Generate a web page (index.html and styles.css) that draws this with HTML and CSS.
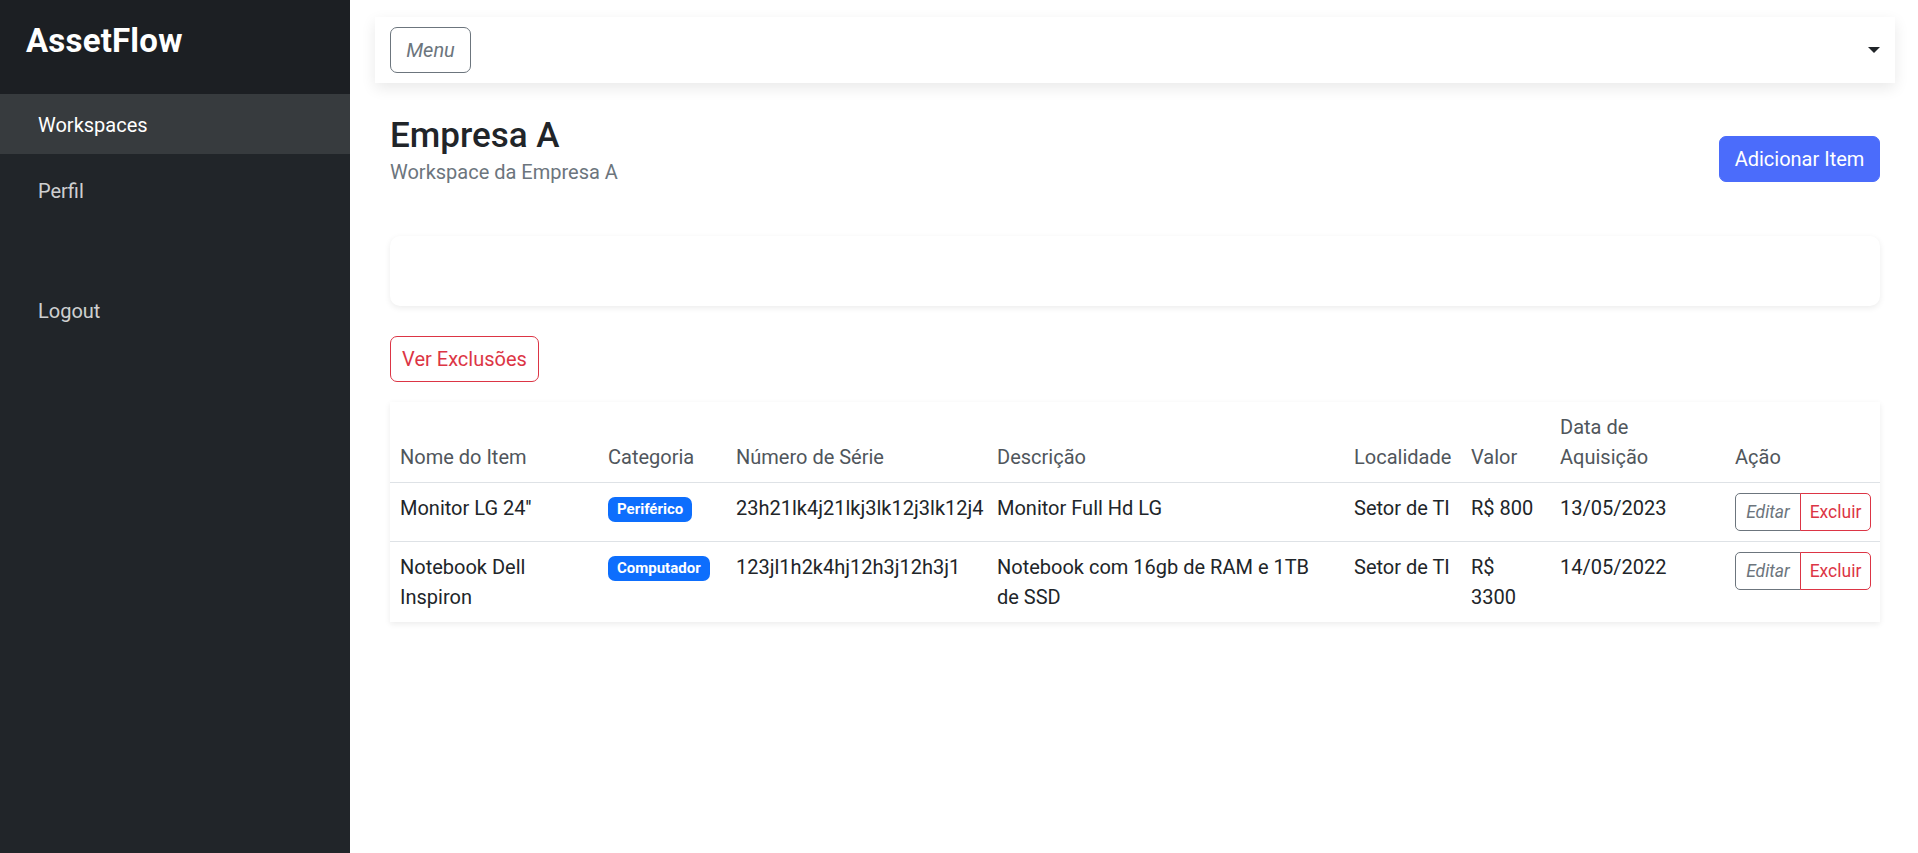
FILE: index.html
```html
<!DOCTYPE html>
<html lang="pt-BR">
<head>
<meta charset="utf-8">
<title>AssetFlow</title>
<link rel="stylesheet" href="styles.css">
</head>
<body>
<div class="app">
  <aside class="sidebar">
    <div class="brand">AssetFlow</div>
    <nav class="side-nav">
      <a class="side-link active" href="#">Workspaces</a>
      <a class="side-link perfil" href="#">Perfil</a>
      <a class="side-link logout" href="#">Logout</a>
    </nav>
  </aside>
  <main class="main">
    <header class="topbar">
      <button class="btn btn-menu">Menu</button>
      <span class="caret"></span>
    </header>
    <section class="content">
      <div class="page-head">
        <div class="page-titles">
          <h1 class="page-title">Empresa A</h1>
          <p class="page-sub">Workspace da Empresa A</p>
        </div>
        <button class="btn btn-primary">Adicionar Item</button>
      </div>
      <div class="filter-card"></div>
      <button class="btn btn-outline-danger">Ver Exclusões</button>
      <div class="table-card">
        <table class="items">
          <colgroup>
            <col class="c-name"><col class="c-cat"><col class="c-serial"><col class="c-desc">
            <col class="c-loc"><col class="c-val"><col class="c-date"><col class="c-act">
          </colgroup>
          <thead>
            <tr>
              <th>Nome do Item</th>
              <th>Categoria</th>
              <th>Número de Série</th>
              <th>Descrição</th>
              <th>Localidade</th>
              <th>Valor</th>
              <th>Data de<br>Aquisição</th>
              <th>Ação</th>
            </tr>
          </thead>
          <tbody>
            <tr>
              <td>Monitor LG 24''</td>
              <td><span class="badge">Periférico</span></td>
              <td>23h21lk4j21lkj3lk12j3lk12j4</td>
              <td>Monitor Full Hd LG</td>
              <td>Setor de TI</td>
              <td>R$ 800</td>
              <td>13/05/2023</td>
              <td><div class="btn-group"><button class="btn-sm btn-edit">Editar</button><button class="btn-sm btn-del">Excluir</button></div></td>
            </tr>
            <tr>
              <td>Notebook Dell Inspiron</td>
              <td><span class="badge">Computador</span></td>
              <td>123jl1h2k4hj12h3j12h3j1</td>
              <td>Notebook com 16gb de RAM e 1TB de SSD</td>
              <td>Setor de TI</td>
              <td>R$ 3300</td>
              <td>14/05/2022</td>
              <td><div class="btn-group"><button class="btn-sm btn-edit">Editar</button><button class="btn-sm btn-del">Excluir</button></div></td>
            </tr>
          </tbody>
        </table>
      </div>
    </section>
  </main>
</div>
</body>
</html>
```
FILE: styles.css
```css
* { box-sizing: border-box; }
html, body { margin: 0; padding: 0; }
body {
  font-family: Roboto, "Liberation Sans", sans-serif;
  font-size: 20px;
  line-height: 30px;
  color: #212529;
  background: #fff;
  overflow: hidden;
}
.app { display: flex; height: 100vh; }

.sidebar {
  width: 350px;
  flex: 0 0 350px;
  background: #212529;
  display: flex;
  flex-direction: column;
}
.brand {
  height: 94px;
  padding: 21px 0 0 26px;
  background: #1c1f23;
  color: #fff;
  font-size: 33px;
  line-height: 40px;
  font-weight: 700;
  letter-spacing: .2px;
}
.side-nav { display: flex; flex-direction: column; }
.side-link {
  display: block;
  height: 60px;
  padding: 16px 38px 14px;
  color: rgba(255,255,255,.8);
  text-decoration: none;
  font-size: 20px;
  line-height: 30px;
}
.side-link.active { background: #373b3e; color: #fff; }
.side-link.perfil { margin-top: 6px; }
.side-link.logout { margin-top: 60px; }

.main {
  flex: 1;
  padding: 17px 23px 0 25px;
  min-width: 0;
}
.topbar {
  height: 66px;
  padding: 10px 15px;
  display: flex;
  align-items: center;
  justify-content: space-between;
  background: #fff;
  box-shadow: 0 5px 14px rgba(0,0,0,.09);
}
.caret {
  width: 0; height: 0;
  border-top: 6px solid #212529;
  border-left: 6px solid transparent;
  border-right: 6px solid transparent;
}

.btn {
  font-family: inherit;
  font-size: 20px;
  line-height: 30px;
  height: 46px;
  padding: 7px 0;
  text-align: center;
  white-space: nowrap;
  border-radius: 7px;
  border: 1px solid transparent;
  background: transparent;
  cursor: pointer;
}
.btn-menu {
  border-color: #6c757d;
  color: #6c757d;
  font-style: italic;
  width: 81px;
}
.btn-primary {
  background: #4b6cfb;
  border-color: #4b6cfb;
  color: #fff;
  width: 161px;
  margin-top: 21px;
}
.btn-outline-danger {
  border-color: #dc3545;
  color: #dc3545;
  width: 149px;
  display: block;
  margin-top: 30px;
}

.content { padding: 0 15px; }
.page-head {
  display: flex;
  justify-content: space-between;
  align-items: flex-start;
  margin-top: 32px;
}
.page-title {
  margin: 0;
  font-size: 35px;
  line-height: 42px;
  font-weight: 500;
}
.page-sub {
  margin: 0;
  color: #6c757d;
  font-size: 20px;
  line-height: 30px;
}
.filter-card {
  margin-top: 49px;
  height: 70px;
  border-radius: 10px;
  background: #fff;
  box-shadow: 0 2px 6px rgba(0,0,0,.08);
}

.table-card {
  margin-top: 20px;
  background: #fff;
  box-shadow: 0 2px 6px rgba(0,0,0,.08);
}
.items {
  width: 100%;
  table-layout: fixed;
  border-collapse: collapse;
}
.c-name { width: 208px; }
.c-cat { width: 128px; }
.c-serial { width: 261px; }
.c-desc { width: 357px; }
.c-loc { width: 117px; }
.c-val { width: 89px; }
.c-date { width: 175px; }
.c-act { width: 155px; }
.items th, .items td {
  padding: 10px;
  text-align: left;
  border-bottom: 1px solid #dee2e6;
  font-size: 20px;
  line-height: 30px;
}
.items th {
  vertical-align: bottom;
  font-weight: 400;
  color: #50565c;
}
.items td { vertical-align: top; }
.items tbody tr:last-child td { border-bottom: 0; }

.badge {
  display: inline-block;
  padding: 5px 9px;
  font-size: 15px;
  line-height: 15px;
  font-weight: 700;
  color: #fff;
  background: #0d6efd;
  border-radius: 7px;
  vertical-align: 1px;
}
.btn-group { display: inline-flex; }
.btn-sm {
  font-family: inherit;
  font-size: 17.5px;
  line-height: 26px;
  height: 38px;
  padding: 5px 0;
  text-align: center;
  white-space: nowrap;
  background: #fff;
  border: 1px solid;
  cursor: pointer;
}
.btn-edit {
  color: #6c757d;
  border-color: #6c757d;
  font-style: italic;
  border-radius: 5px 0 0 5px;
  width: 66px;
}
.btn-del {
  color: #dc3545;
  border-color: #dc3545;
  border-radius: 0 5px 5px 0;
  margin-left: -1px;
  width: 71px;
  position: relative;
}
```
